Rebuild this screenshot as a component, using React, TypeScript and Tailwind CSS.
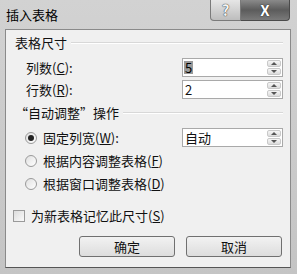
import React from 'react';

const font = { fontFamily: '"SimSun", "Noto Sans CJK SC", "Liberation Sans", sans-serif' };

function Spin({ value, selected }: { value: string; selected?: boolean }) {
    return (
        <div className="ml-auto w-[101px] h-[19px] flex bg-white border border-[#a9a9a9]">
            <div className="flex-1 flex items-center pl-[1px] text-[13px] leading-none text-[#111]">
                <span className={selected ? 'bg-[#9a9a9a] text-black px-[1px]' : 'px-[1px]'}>{value}</span>
            </div>
            <div className="w-[16px] flex flex-col gap-[1px] p-[1px]">
                <div className="flex-1 flex items-center justify-center bg-gradient-to-b from-[#f6f6f6] to-[#dcdcdc] border border-[#c9c9c9] rounded-[2px]">
                    <span className="w-0 h-0 border-l-[3px] border-r-[3px] border-b-[3px] border-l-transparent border-r-transparent border-b-[#555]" />
                </div>
                <div className="flex-1 flex items-center justify-center bg-gradient-to-b from-[#f6f6f6] to-[#dcdcdc] border border-[#c9c9c9] rounded-[2px]">
                    <span className="w-0 h-0 border-l-[3px] border-r-[3px] border-t-[3px] border-l-transparent border-r-transparent border-t-[#555]" />
                </div>
            </div>
        </div>
    );
}

function Radio({ checked, label }: { checked?: boolean; label: React.ReactNode }) {
    return (
        <div className="flex items-center gap-[6px]">
            <span className="w-[12px] h-[12px] rounded-full border border-[#9a9a9a] bg-gradient-to-br from-[#e0e0e0] to-[#ffffff] flex items-center justify-center">
                {checked && <span className="w-[6px] h-[6px] rounded-full bg-[#222]" />}
            </span>
            <span>{label}</span>
        </div>
    );
}

function Group({ title }: { title: string }) {
    return (
        <div className="h-[20px] flex items-center pl-[9px] pr-[7px] gap-[4px]">
            <span>{title}</span>
            <div className="flex-1 border-t border-[#d8d8d8] border-b border-b-white" />
        </div>
    );
}

export default function App() {
    return (
        <div className="w-[297px] h-[274px] flex flex-col bg-gradient-to-b from-[#d2d2d2] to-[#c4c4c4] text-[13px] text-[#111] overflow-hidden" style={font}>
            {/* Title bar */}
            <div className="h-[29px] flex items-start shrink-0">
                <div className="pl-[6px] pt-[7px] text-[13px] leading-[15px] text-black">插入表格</div>
                <div className="ml-auto mr-[7px] flex">
                    <div className="w-[31px] h-[21px] rounded-bl-[4px] border border-t-0 border-[#7a7a7a] bg-gradient-to-b from-[#e6e6e6] to-[#bdbdbd] flex items-center justify-center text-[15px] font-bold text-[#f4f4f4] [text-shadow:0_0_1px_#333,0_0_1px_#333]">
                        ?
                    </div>
                    <div className="w-[49px] h-[21px] rounded-br-[4px] border border-t-0 border-l-0 border-[#4a4a4a] bg-gradient-to-b from-[#8a8a8a] via-[#5c5c5c] to-[#7a7a7a] flex items-center justify-center text-[15px] font-bold text-white [text-shadow:0_0_1px_#222,0_0_1px_#222]">
                        X
                    </div>
                </div>
            </div>

            {/* Content */}
            <div className="ml-[5px] mr-[6px] h-[239px] flex flex-col bg-[#f0f0f0] border border-[#8a8a8a] border-b-[#555] pt-[3px]">
                <Group title="表格尺寸" />
                <div className="mt-[5px] h-[19px] flex items-center pl-[20px] pr-[7px]">
                    <span>列数(<u>C</u>):</span>
                    <Spin value="5" selected />
                </div>
                <div className="mt-[3px] h-[19px] flex items-center pl-[20px] pr-[7px]">
                    <span>行数(<u>R</u>):</span>
                    <Spin value="2" />
                </div>
                <div className="mt-[4px]">
                    <Group title="“自动调整”操作" />
                </div>
                <div className="mt-[5px] h-[19px] flex items-center pl-[19px] pr-[7px]">
                    <Radio checked label={<>固定列宽(<u>W</u>):</>} />
                    <Spin value="自动" />
                </div>
                <div className="mt-[4px] h-[20px] flex items-center pl-[19px]">
                    <Radio label={<>根据内容调整表格(<u>F</u>)</>} />
                </div>
                <div className="mt-[3px] h-[20px] flex items-center pl-[19px]">
                    <Radio label={<>根据窗口调整表格(<u>D</u>)</>} />
                </div>
                <div className="mt-[12px] h-[20px] flex items-center pl-[7px] gap-[6px]">
                    <span className="w-[12px] h-[12px] border border-[#9a9a9a] bg-gradient-to-br from-[#dcdcdc] to-[#fafafa]" />
                    <span>为新表格记忆此尺寸(<u>S</u>)</span>
                </div>
                <div className="mt-[10px] flex justify-end gap-[11px] pr-[8px]">
                    <button className="w-[96px] h-[21px] rounded-[3px] border border-[#707070] bg-gradient-to-b from-[#f2f2f2] to-[#dddddd] text-[13px] leading-none">确定</button>
                    <button className="w-[96px] h-[21px] rounded-[3px] border border-[#707070] bg-gradient-to-b from-[#f2f2f2] to-[#dddddd] text-[13px] leading-none">取消</button>
                </div>
            </div>
        </div>
    );
}
